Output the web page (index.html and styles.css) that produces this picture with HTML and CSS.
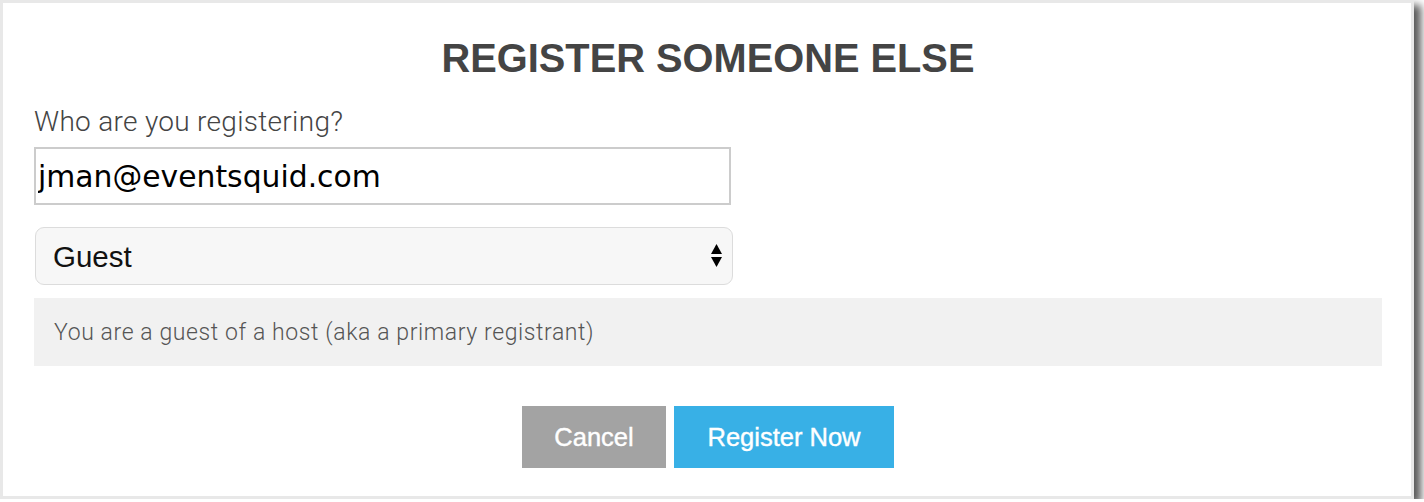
FILE: index.html
```html
<!DOCTYPE html>
<html>
<head>
<meta charset="utf-8">
<link rel="stylesheet" href="styles.css">
</head>
<body>
<div class="modal">
  <h1 class="title">REGISTER SOMEONE ELSE</h1>
  <label class="label" for="who">Who are you registering?</label>
  <input class="email" id="who" type="text" value="jman@eventsquid.com">
  <div class="select-wrap">
    <select class="select">
      <option>Guest</option>
    </select>
    <svg class="arrows" width="13" height="26" viewBox="0 0 13 26">
      <polygon points="6.5,1 12,11 1,11" fill="#000"/>
      <polygon points="1,14 12,14 6.5,24" fill="#000"/>
    </svg>
  </div>
  <div class="info">You are a guest of a host (aka a primary registrant)</div>
  <div class="actions">
    <button class="btn btn-cancel">Cancel</button>
    <button class="btn btn-primary">Register Now</button>
  </div>
</div>
</body>
</html>
```

FILE: styles.css
```css
html, body {
  margin: 0;
  padding: 0;
  background: #ffffff;
  overflow: hidden;
}

.modal {
  box-sizing: border-box;
  width: 1414px;
  height: 499px;
  border: 3px solid #e8e8e8;
  background: #ffffff;
  box-shadow: 7px 5px 8px rgba(0, 0, 0, 0.65);
  padding: 32px 29px 0 31px;
  display: flex;
  flex-direction: column;
  align-items: flex-start;
  font-family: "Liberation Sans", Arial, sans-serif;
}

.title {
  align-self: stretch;
  margin: 0;
  text-align: center;
  font-family: "Liberation Sans", Arial, sans-serif;
  font-weight: bold;
  font-size: 39.8px;
  line-height: 46px;
  color: #444444;
}

.label {
  margin-top: 25px;
  font-family: Roboto, "Liberation Sans", sans-serif;
  font-weight: 300;
  font-size: 28px;
  letter-spacing: 0.3px;
  line-height: 32px;
  color: #444444;
}

.email {
  box-sizing: border-box;
  margin: 9px 0 0 0;
  width: 697px;
  height: 58px;
  border: 2px solid #cccccc;
  border-radius: 0;
  padding: 0 0 0 2px;
  font-family: "DejaVu Sans", Verdana, sans-serif;
  font-size: 29.8px;
  color: #000000;
  background: #ffffff;
  outline: none;
}

.select-wrap {
  position: relative;
  margin: 22px 0 0 1px;
  width: 698px;
  height: 58px;
}

.select {
  box-sizing: border-box;
  appearance: none;
  -webkit-appearance: none;
  width: 100%;
  height: 100%;
  border: 1px solid #dcdcdc;
  border-radius: 9px;
  background: #f7f7f7;
  padding: 0 0 0 17px;
  font-family: "Liberation Sans", Arial, sans-serif;
  font-size: 29.5px;
  color: #111111;
  outline: none;
}

.arrows {
  position: absolute;
  right: 10px;
  top: 16px;
  pointer-events: none;
}

.info {
  box-sizing: border-box;
  margin-top: 13px;
  align-self: stretch;
  height: 68px;
  background: #f1f1f1;
  padding: 0 0 0 20px;
  display: flex;
  align-items: center;
  font-family: Roboto, "Liberation Sans", sans-serif;
  font-weight: 300;
  font-size: 23px;
  letter-spacing: 0.6px;
  color: #555555;
}

.actions {
  align-self: stretch;
  margin-top: 40px;
  display: flex;
  justify-content: center;
  gap: 8px;
}

.btn {
  height: 62px;
  border: none;
  border-radius: 0;
  color: #ffffff;
  font-family: "Liberation Sans", Arial, sans-serif;
  font-size: 25.5px;
  -webkit-text-stroke: 0.4px #ffffff;
  padding: 0;
  cursor: pointer;
}

.btn-cancel {
  width: 144px;
  background: #a3a3a3;
}

.btn-primary {
  width: 220px;
  background: #38b0e6;
}
```
